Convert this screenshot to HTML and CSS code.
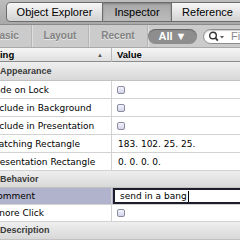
FILE: index.html
```html
<!DOCTYPE html>
<html lang="en">
<head>
  <meta charset="UTF-8">
  <meta name="viewport" content="width=device-width, initial-scale=1.0">
  <title>Inspector</title>
  <link rel="stylesheet" href="styles.css">
</head>
<body>

<div class="panel">
  <div class="topbar">
    <div class="seg">
      <button class="seg-btn explorer">Object Explorer</button>
      <button class="seg-btn inspector on">Inspector</button>
      <button class="seg-btn reference">Reference</button>
    </div>
  </div>

  <div class="tabs">
    <span class="tab basic">Basic</span>
    <span class="tab layout">Layout</span>
    <span class="tab recent">Recent</span>
    <span class="pill">All ▼</span>
    <div class="search">
      <svg width="18" height="11" viewBox="0 0 18 11">
        <circle cx="5" cy="4.5" r="3.3" fill="none" stroke="#333" stroke-width="1.4"/>
        <line x1="7.4" y1="6.9" x2="9.8" y2="9.6" stroke="#333" stroke-width="1.7"/>
        <path d="M12 5 L16 5 L14 7.5 Z" fill="#555"/>
      </svg>
      <span class="placeholder">Filter</span>
    </div>
  </div>

  <div class="table">
    <div class="head">
      <div class="name">Setting <span class="sort">▲</span></div>
      <div class="value">Value</div>
    </div>

    <div class="section first">Appearance</div>
    <div class="row"><div class="name">Hide on Lock</div><div class="value"><span class="check"></span></div></div>
    <div class="row"><div class="name">Include in Background</div><div class="value"><span class="check"></span></div></div>
    <div class="row"><div class="name">Include in Presentation</div><div class="value"><span class="check"></span></div></div>
    <div class="row"><div class="name">Matching Rectangle</div><div class="value">183. 102. 25. 25.</div></div>
    <div class="row"><div class="name">Presentation Rectangle</div><div class="value">0. 0. 0. 0.</div></div>

    <div class="section short">Behavior</div>
    <div class="row short selected">
      <div class="name">Comment</div>
      <div class="value"><div class="edit">send in a bang<span class="caret"></span></div></div>
    </div>
    <div class="row short"><div class="name">Ignore Click</div><div class="value"><span class="check"></span></div></div>

    <div class="section">Description</div>
  </div>
</div>

</body>
</html>
```

FILE: styles.css
```css
body {
  margin: 0;
  width: 240px;
  height: 240px;
  overflow: hidden;
  background: #fff;
  font-family: 'Liberation Sans', Arial, sans-serif;
  font-size: 10px;
  color: #000;
}

/* the view is scrolled a little to the right */
.panel {
  margin-left: -20px;
  width: 330px;
}

.topbar {
  height: 25px;
  background: linear-gradient(#bdbdbd, #a9a9a9);
  border-bottom: 1px solid #8a8a8a;
  padding: 2px 0 0 26px;
  box-sizing: border-box;
}

.seg {
  display: flex;
  height: 20px;
}

.seg-btn {
  flex: none;
  font-family: 'Liberation Sans', Arial, sans-serif;
  font-size: 11px;
  color: #000;
  padding: 0;
  margin: 0;
  height: 20px;
  border: 1px solid #6c6c6c;
  border-left: none;
  background: linear-gradient(#f7f7f7, #d2d2d2);
}

.explorer {
  width: 97px;
  border-left: 1px solid #6c6c6c;
  border-radius: 4px 0 0 4px;
}

.inspector {
  width: 69px;
}

.reference {
  width: 72px;
}

.seg-btn.on {
  background: linear-gradient(#a8a8a8, #bcbcbc);
  box-shadow: inset 0 1px 2px rgba(0, 0, 0, 0.25);
}

.tabs {
  display: flex;
  align-items: center;
  height: 22px;
  background: #cbcbcb;
}

.tabs > * {
  flex: none;
}

.tab {
  height: 22px;
  line-height: 22px;
  text-align: center;
  font-weight: bold;
  color: #828282;
  text-shadow: 0 1px 0 #e6e6e6;
  border-right: 1px solid #b6b6b6;
  box-shadow: 1px 0 0 #dedede;
}

.basic {
  width: 51px;
}

.layout {
  width: 56px;
}

.recent {
  width: 58px;
}

.pill {
  width: 49px;
  height: 15px;
  line-height: 15px;
  border-radius: 8px;
  background: #8e8e8e;
  color: #fff;
  font-weight: bold;
  font-size: 11px;
  text-align: center;
  box-shadow: inset 0 1px 1px rgba(0, 0, 0, 0.3);
}

.search {
  display: flex;
  align-items: center;
  gap: 5px;
  margin-left: 6px;
  height: 15px;
  width: 80px;
  padding-left: 4px;
  border: 1px solid #8c8c8c;
  border-radius: 8px;
  background: #fff;
  box-sizing: border-box;
  box-shadow: inset 0 1px 1px rgba(0, 0, 0, 0.2);
}

.placeholder {
  color: #8a8a8a;
  font-size: 11px;
}

.head {
  display: grid;
  grid-template-columns: 132px 1fr;
  height: 15px;
  border-top: 1px solid #a9a9a9;
  border-bottom: 1px solid #8c8c8c;
  background: linear-gradient(#f6f6f6, #dfdfdf);
  font-weight: bold;
  font-size: 9.5px;
  line-height: 14px;
  box-sizing: border-box;
}

.head .name {
  display: flex;
  justify-content: space-between;
  padding-left: 2px;
  padding-right: 8px;
  border-right: 1px solid #b9b9b9;
}

.sort {
  font-size: 6px;
  color: #555;
}

.head .value {
  padding-left: 5px;
}

.section {
  height: 18px;
  line-height: 17px;
  padding-left: 20px;
  background: linear-gradient(#efefef, #d8d8d8);
  border-bottom: 1px solid #c2c2c2;
  box-sizing: border-box;
  font-weight: bold;
  font-size: 9px;
  color: #3a3a3a;
}

.section.first {
  height: 19px;
  line-height: 18px;
}

.row {
  display: grid;
  grid-template-columns: 132px 1fr;
  height: 18px;
  line-height: 18px;
  border-bottom: 1px solid #d2d2d2;
  box-sizing: border-box;
  background: #fff;
  font-family: 'DejaVu Sans', sans-serif;
  font-size: 9px;
}

.section.short,
.row.short {
  height: 17px;
  line-height: 16px;
}

.row .name {
  padding-left: 11px;
  border-right: 1px solid #d2d2d2;
  white-space: nowrap;
  overflow: hidden;
}

.row .value {
  padding-left: 6px;
  display: flex;
  align-items: center;
  white-space: nowrap;
}

.check {
  width: 8px;
  height: 8px;
  margin-left: -1px;
  border: 1px solid #8b8b9e;
  border-radius: 2px;
  background: linear-gradient(#f4f4ff, #d4d4ea);
  box-sizing: border-box;
}

.row.selected {
  background: #b1b3cc;
}

.row.selected .value {
  padding-left: 1px;
}

.edit {
  display: flex;
  align-items: center;
  width: 160px;
  height: 16px;
  padding-left: 5px;
  border: 2px solid #1d1d2c;
  background: #fff;
  box-sizing: border-box;
  line-height: 12px;
}

.caret {
  width: 1px;
  height: 11px;
  margin-left: 1px;
  background: #000;
}
```
